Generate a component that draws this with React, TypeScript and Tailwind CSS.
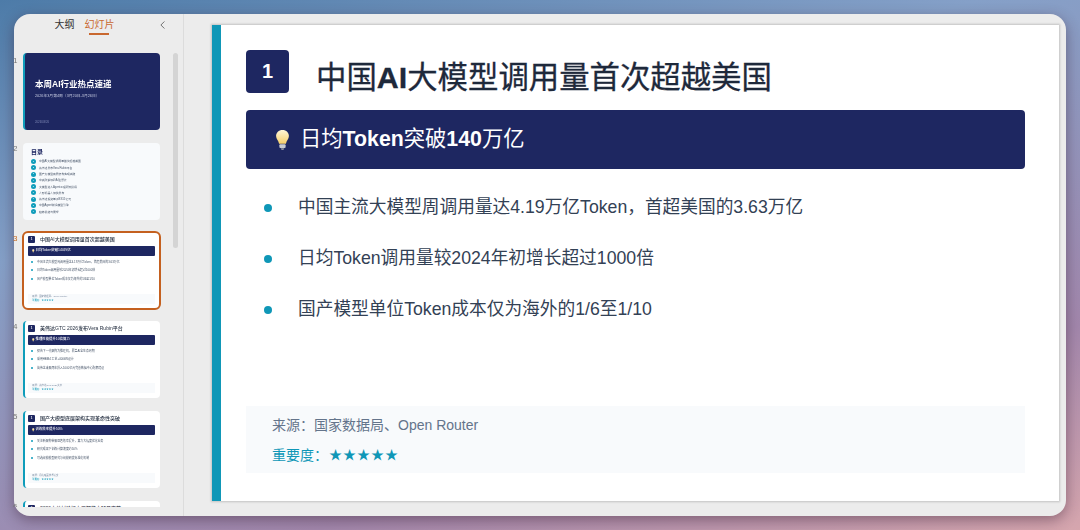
import React from 'react';
import { ChevronLeft } from 'lucide-react';

const FONT = { fontFamily: '"Liberation Sans", "Noto Sans CJK SC", sans-serif' };

const Bulb: React.FC<{ className?: string }> = ({ className }) => (
    <svg viewBox="0 0 16 24" className={className}>
        <defs>
            <linearGradient id="bulbGlow" x1="0" y1="0" x2="0" y2="1">
                <stop offset="0" stopColor="#fff6d8" />
                <stop offset="1" stopColor="#f7cf6a" />
            </linearGradient>
        </defs>
        <path d="M8 1C3.8 1 1 4 1 7.6c0 3.4 2.6 4.9 3.3 8.4h7.4c.7-3.5 3.3-5 3.3-8.4C15 4 12.2 1 8 1z" fill="url(#bulbGlow)" />
        <rect x="4.6" y="16.6" width="6.8" height="4" rx="1" fill="#c9ccd2" />
        <path d="M6 21h4l-1 2H7z" fill="#8d929c" />
    </svg>
);

const tocItems = [
    '中国AI大模型调用量首次超越美国',
    '英伟达发布Vera Rubin平台',
    '国产大模型底层架构实现突破',
    '中央政策加码AI主题片',
    '大模型进入Agent工程研究阶段',
    '人形机器人加快发布',
    '英伟达投资量子BS15亿元',
    '中国Agent前沿模型引擎',
    '趋势总结与展望',
];

type ThumbData = {
    no: number;
    title: string;
    banner: string;
    bullets: string[];
    source: string;
    selected?: boolean;
};

const thumbs: ThumbData[] = [
    {
        no: 3,
        title: '中国AI大模型调用量首次超越美国',
        banner: '日均Token突破140万亿',
        bullets: [
            '中国主流大模型周调用量达4.19万亿Token，首超美国的3.63万亿',
            '日均Token调用量较2024年初增长超过1000倍',
            '国产模型单位Token成本仅为海外的1/6至1/10',
        ],
        source: '来源：国家数据局、Open Router',
        selected: true,
    },
    {
        no: 4,
        title: '英伟达GTC 2026发布Vera Rubin平台',
        banner: '推理性能提升10倍算力',
        bullets: [
            '预告下一代架构为推理机，覆盖AI全生命周期',
            '采用HBM4 工艺+400kW设计',
            '英伟达未来两年投入1000亿元完善数据中心配套建设',
        ],
        source: '来源：英伟达GTC 2026大会',
    },
    {
        no: 5,
        title: '国产大模型底层架构实现革命性突破',
        banner: '训练效率提升50%',
        bullets: [
            '关注新架构带来显著效率提升，算力大幅度优化业务',
            '研究成果下训练计算速度约50%',
            '可选规模模型研究与规模研发标准化机制',
        ],
        source: '来源：月之暗面技术论文',
    },
];

const ThumbSlide: React.FC<{ t: ThumbData }> = ({ t }) => (
    <div className={t.selected ? 'relative -my-[2px]' : 'relative'}>
        <span className={`absolute left-[-10px] text-[8px] leading-[12px] ${t.selected ? 'top-[2px] text-[#c8691f]' : 'top-[0px] text-[#777]'}`}>{t.no}</span>
        <div
            className={
                t.selected
                    ? 'w-[139px] h-[79px] -ml-px rounded-[6px] border-2 border-[#c4601f] bg-white overflow-hidden flex flex-col pl-[4px] pr-[4px] pt-[3px]'
                    : 'w-[137px] h-[77px] rounded-[4px] bg-white overflow-hidden flex flex-col border-l-2 border-[#0f9dbb] pl-[3px] pr-[5px] pt-[4px]'
            }
        >
            <div className="flex items-center gap-[5px] h-[7px]">
                <div className="w-[7px] h-[7px] rounded-[1px] bg-[#1e2761] text-white text-[3px] font-bold flex items-center justify-center">1</div>
                <div className="text-[5px] leading-[7px] font-medium text-[#1e293b] whitespace-nowrap">{t.title}</div>
            </div>
            <div className="mt-[3px] h-[10px] shrink-0 bg-[#1e2761] rounded-[1px] flex items-center pl-[4px] gap-[1px] text-white text-[3.4px] font-medium">
                <Bulb className="w-[2.5px] h-[4px]" />
                {t.banner}
            </div>
            <div className="mt-[4px] pl-[3px] flex flex-col gap-[4.4px]">
                {t.bullets.map((b, i) => (
                    <div key={i} className="flex items-center gap-[4px] h-[4px] text-[2.9px] text-[#475569] whitespace-nowrap">
                        <span className="w-[2px] h-[2px] rounded-full bg-[#0f9dbb]" />
                        {b}
                    </div>
                ))}
            </div>
            <div className="mt-[13px] h-[10px] shrink-0 bg-[#f8fafc] pl-[4px] flex flex-col justify-center gap-[1px] text-[2.4px] leading-[3px]">
                <div className="text-[#7a8aa0]">{t.source}</div>
                <div className="text-[#0f9dbb]">重要度：★★★★★</div>
            </div>
        </div>
    </div>
);

const Sidebar: React.FC = () => (
    <aside className="w-[170px] shrink-0 h-full flex flex-col border-r border-[#dcdcdc]">
        <div className="h-[39px] shrink-0 relative flex justify-center gap-[10px] pt-[3px] pr-[28px] text-[10px] leading-[16px]">
            <span className="text-[#333]">大纲</span>
            <span className="relative text-[#c9682f]">
                幻灯片
                <span className="absolute left-[4px] top-[16px] w-[20px] h-[2px] bg-[#c9682f]" />
            </span>
            <ChevronLeft className="absolute right-[14px] top-[4px] w-[13px] h-[14px] text-[#555]" strokeWidth={1.5} />
        </div>
        <div className="relative h-[454px]">
            <div className="absolute left-[159px] top-0 w-[5px] h-[195px] rounded-full bg-[#d4d4d4]" />
            <div className="h-full pl-[9px] flex flex-col gap-[13px] blur-[0.35px] [clip-path:inset(0_-20px_0_-20px)]">
                <div className="relative">
                    <span className="absolute left-[-10px] top-[2px] text-[8px] leading-[12px] text-[#777]">1</span>
                    <div className="w-[137px] h-[77px] rounded-[4px] bg-[#1e2761] border-l-2 border-[#0f9dbb] flex flex-col pl-[10px] text-white">
                        <div className="mt-[25px] text-[8.5px] leading-[12px] font-bold">本周AI行业热点速递</div>
                        <div className="mt-[4px] text-[3.8px] leading-[5px] text-[#c5cae0]">2026年3月第4周（3月20日-3月26日）</div>
                        <div className="mt-[21px] text-[2.8px] leading-[4px] text-[#7f88b5]">2026/03/26</div>
                    </div>
                </div>
                <div className="relative">
                    <span className="absolute left-[-10px] top-[0px] text-[8px] leading-[12px] text-[#777]">2</span>
                    <div className="w-[137px] h-[77px] rounded-[4px] bg-[#f8fafc] pl-[8px] pt-[5px]">
                        <div className="text-[6px] leading-[9px] font-bold text-[#1e2761]">目录</div>
                        <div className="mt-[2px] flex flex-col gap-[1.3px]">
                            {tocItems.map((item, i) => (
                                <div key={i} className="flex items-center gap-[3px] h-[5px] text-[2.8px] text-[#475569] whitespace-nowrap">
                                    <span className="w-[5px] h-[5px] rounded-full bg-[#0f9dbb] text-white text-[2.5px] flex items-center justify-center">{i + 1}</span>
                                    {item}
                                </div>
                            ))}
                        </div>
                    </div>
                </div>
                <ThumbSlide t={thumbs[0]} />
                <ThumbSlide t={thumbs[1]} />
                <ThumbSlide t={thumbs[2]} />
                <div className="relative">
                    <span className="absolute left-[-10px] top-[0px] text-[8px] leading-[12px] text-[#777]">6</span>
                    <div className="w-[137px] h-[77px] rounded-[4px] bg-white border-l-2 border-[#0f9dbb] pl-[3px] pt-[4px]">
                        <div className="flex items-center gap-[5px] h-[7px]">
                            <div className="w-[7px] h-[7px] rounded-[1px] bg-[#1e2761] text-white text-[3px] font-bold flex items-center justify-center">1</div>
                            <div className="text-[5px] leading-[7px] font-medium text-[#1e293b] whitespace-nowrap">2026中关村论坛上工智能十项月方荐</div>
                        </div>
                    </div>
                </div>
            </div>
        </div>
    </aside>
);

const MainSlide: React.FC = () => (
    <div className="w-[847px] h-[476px] bg-white border-l-[9px] border-[#0f97b7] shadow-[0_0_2px_1px_rgba(0,0,0,0.18)] pl-[25px] pr-[34px] pt-[25px] flex flex-col">
        <div className="flex items-center h-[43px] gap-[27px]">
            <div className="w-[43px] h-[43px] pb-[1px] rounded-[4px] bg-[#1e2761] text-white text-[20px] font-bold flex items-center justify-center">1</div>
            <h1 className="text-[30.4px] leading-[43px] mt-[12px] font-normal [-webkit-text-stroke:0.3px_#1e293b] text-[#1e293b] whitespace-nowrap">
                中国<span className="font-bold">AI</span>大模型调用量首次超越美国
            </h1>
        </div>
        <div className="mt-[17px] h-[59px] shrink-0 rounded-[4px] bg-[#1e2761] flex items-center pl-[29px] gap-[10px] text-white text-[21.3px]">
            <Bulb className="w-[15px] h-[22px]" />
            <span>日均<span className="font-bold">Token</span>突破<span className="font-bold">140</span>万亿</span>
        </div>
        <ul className="mt-[26px] pl-[18px] flex flex-col gap-[26px] text-[17.7px] leading-[25px] text-[#334155]">
            <li className="flex items-center gap-[26px]"><span className="w-[8px] h-[8px] rounded-full bg-[#0f97b7]" />中国主流大模型周调用量达4.19万亿Token，首超美国的3.63万亿</li>
            <li className="flex items-center gap-[26px]"><span className="w-[8px] h-[8px] rounded-full bg-[#0f97b7]" />日均Token调用量较2024年初增长超过1000倍</li>
            <li className="flex items-center gap-[26px]"><span className="w-[8px] h-[8px] rounded-full bg-[#0f97b7]" />国产模型单位Token成本仅为海外的1/6至1/10</li>
        </ul>
        <div className="mt-[84px] h-[67px] shrink-0 bg-[#f8fafc] pl-[26px] pt-[9px] text-[14px]">
            <div className="leading-[20px] text-[#64748b]">来源：国家数据局、Open Router</div>
            <div className="mt-[10px] leading-[20px] text-[#0f97b7] flex items-center">
                重要度：<span className="ml-[1px] text-[13px] tracking-[1px]">★★★★★</span>
            </div>
        </div>
    </div>
);

export default function App() {
    return (
        <div
            style={FONT}
            className="w-[1080px] h-[530px] overflow-hidden pt-[14px] pl-[14px] bg-[linear-gradient(165deg,#4d7ba8_0%,#85a0c8_32%,#a287ac_75%,#d6a6ae_100%)]"
        >
            <div className="w-[1052px] h-[502px] rounded-[16px] bg-[#ececec] flex shadow-[0_4px_14px_rgba(60,30,50,0.45)]">
                <Sidebar />
                <main className="flex-1 pl-[28px] pt-[11px]">
                    <MainSlide />
                </main>
            </div>
        </div>
    );
}
